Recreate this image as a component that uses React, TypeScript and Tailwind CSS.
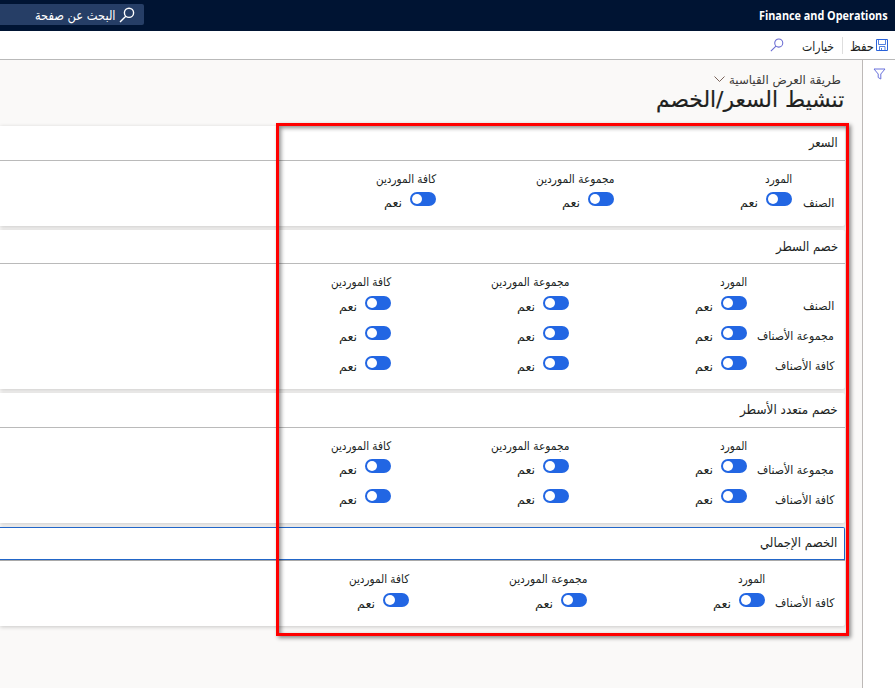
import { useLayoutEffect, useRef, useState } from "react";

type FitProps = { text: string; width: number; className?: string; ltr?: boolean };

// One line of text condensed or stretched horizontally to an exact width.
function Fit({ text, width, className = "", ltr = false }: FitProps) {
  const ref = useRef<HTMLSpanElement>(null);
  const [scale, setScale] = useState(1);
  useLayoutEffect(() => {
    if (ref.current) setScale(width / ref.current.offsetWidth);
  }, [width]);
  return (
    <span dir={ltr ? "ltr" : "rtl"} className={`flex h-5 shrink-0 items-center ${className}`} style={{ width }}>
      <span
        ref={ref}
        className={`block shrink-0 whitespace-nowrap leading-5 ${ltr ? "origin-left" : "origin-right"}`}
        style={{ transform: `scaleX(${scale})` }}
      >
        {text}
      </span>
    </span>
  );
}

type Label = [string, number];

const ITEM: Label = ["الصنف", 31];
const ITEM_GROUP: Label = ["مجموعة الأصناف", 77];
const ALL_ITEMS: Label = ["كافة الأصناف", 59];
const COLUMNS: Label[] = [
  ["المورد", 27],
  ["مجموعة الموردين", 78],
  ["كافة الموردين", 60],
];

function Toggle() {
  return (
    <div className="flex w-[178px] shrink-0 items-start">
      <span className="flex h-[14px] w-[26px] items-center justify-end rounded-full bg-[#2266e3] px-[2px]">
        <span className="size-[9.5px] rounded-full bg-white" />
      </span>
      <Fit text="نعم" width={18} className="mr-[8px] mt-[1px] text-[12px]" />
    </div>
  );
}

type SectionProps = {
  title: Label;
  rows: Label[];
  labelCol: string;
  size: string;
  headerHeight: string;
  firstRow: string;
  labelDrop?: string;
  focused?: boolean;
};

function Section({ title, rows, labelCol, size, headerHeight, firstRow, labelDrop = "", focused }: SectionProps) {
  return (
    <section className={`shrink-0 rounded-r-[2px] bg-white shadow-[0_1px_4px_rgba(0,0,0,0.2)] ${size}`}>
      <div className={`border-b ${headerHeight} ${focused ? "border-[#a9a9a9]" : "border-[#bababa]"}`}>
        <div
          className={`flex h-full pr-[7px] ${
            focused ? "items-start rounded-tr-[2px] border-y border-r border-[#2266c8] pt-[5px]" : "items-center"
          }`}
        >
          <Fit text={title[0]} width={title[1]} className="text-[13px]" />
        </div>
      </div>
      <div className="flex pr-[11px] pt-[8px] text-[12px]">
        <div className={`shrink-0 ${labelCol}`} />
        {COLUMNS.map(([text, width]) => (
          <div key={text} className="w-[178px] shrink-0">
            <Fit text={text} width={width} />
          </div>
        ))}
      </div>
      <div className={`flex flex-col gap-[16px] pr-[11px] text-[12px] ${firstRow}`}>
        {rows.map(([text, width]) => (
          <div key={text} className="flex h-[14px] items-start">
            <div className={`shrink-0 ${labelCol} ${labelDrop}`}>
              <Fit text={text} width={width} />
            </div>
            <Toggle />
            <Toggle />
            <Toggle />
          </div>
        ))}
      </div>
    </section>
  );
}

function Search({ className }: { className: string }) {
  return (
    <svg viewBox="0 0 16 16" fill="none" stroke="currentColor" className={className}>
      <circle cx="10" cy="5.8" r="4.6" />
      <path d="M6.8 9.2 1 15" />
    </svg>
  );
}

export default function App() {
  return (
    <div
      dir="rtl"
      className="relative flex h-[688px] w-[895px] flex-col overflow-hidden bg-[#faf9f8] font-['DejaVu_Sans',sans-serif] text-[#201f1e]"
    >
      <header className="flex h-[31px] shrink-0 items-start justify-between bg-[#001433] text-white">
        <Fit
          ltr
          text="Finance and Operations"
          width={129}
          className="mr-[7px] mt-[6px] font-['Open_Sans','Noto_Sans',sans-serif] text-[12px] font-bold"
        />
        <div className="mt-[4px] flex h-[21px] w-[144px] items-center rounded-r-[2px] bg-[#263e66] pr-[9px]">
          <Search className="size-[16px] stroke-[1.4]" />
          <Fit text="البحث عن صفحة" width={81} className="mr-[3px] mt-[2px] text-[13px]" />
        </div>
      </header>

      <div className="flex h-[29px] shrink-0 items-center border-b border-[#b9b9b9] bg-white pr-[6px] text-[13px]">
        <svg viewBox="0 0 14 14" fill="none" stroke="#2962d9" className="size-[14px] shrink-0">
          <path d="M1.5 1.5h11v11h-11z" />
          <path d="M3.5 1.5v5h7v-5M4.5 12.5v-4h5.5v4M6.5 10v2" strokeOpacity="0.8" />
        </svg>
        <Fit text="حفظ" width={24} className="mr-[1px] mt-[3px]" />
        <span className="mr-[7px] h-[17px] w-px bg-[#dedede]" />
        <Fit text="خيارات" width={32} className="mr-[8px] mt-[3px]" />
        <Search className="mr-[18px] size-[14px] text-[#696bd2] stroke-[1.2]" />
      </div>

      <div className="flex min-h-0 flex-1">
        <aside className="w-[33px] shrink-0 border-l border-[#bdb9b7] bg-white pr-[9px] pt-[8px]">
          <svg viewBox="0 0 13 12" fill="none" stroke="#6971dc" className="h-[12px] w-[13px]">
            <path d="M1 1h11L7.8 6v5L5.2 9.5V6z" />
          </svg>
        </aside>
        <main className="min-w-0 flex-1">
          <div className="flex h-[21px] items-start pr-[21px] pt-[10px] text-[12px] text-[#3b3a39]">
            <Fit text="طريقة العرض القياسية" width={112} />
            <svg viewBox="0 0 11 6" fill="none" stroke="#79635a" className="mr-[4px] mt-[6px] h-[6px] w-[11px]">
              <path d="m.5.5 5 5 5-5" />
            </svg>
          </div>
          <h1 className="h-[45px] pr-[18px] pt-[9px]">
            <Fit text="تنشيط السعر/الخصم" width={188} className="text-[22px] [-webkit-text-stroke:0.2px_#201f1e]" />
          </h1>
          <div className="flex flex-col pr-[17px]">
            <Section title={["السعر", 29]} rows={[ITEM]} labelCol="w-[42px]" size="h-[100px]" headerHeight="h-[35px]" firstRow="pt-[3px]" labelDrop="pt-px" />
            <Section title={["خصم السطر", 62]} rows={[ITEM, ITEM_GROUP, ALL_ITEMS]} labelCol="w-[87px]" size="mt-[4px] h-[159px]" headerHeight="h-[34px]" firstRow="pt-[4px]" />
            <Section title={["خصم متعدد الأسطر", 98]} rows={[ITEM_GROUP, ALL_ITEMS]} labelCol="w-[87px]" size="mt-[4px] h-[130px]" headerHeight="h-[35px]" firstRow="pt-[3px]" labelDrop="pt-px" />
            <Section title={["الخصم الإجمالي", 77]} rows={[ALL_ITEMS]} labelCol="w-[69px]" size="mt-[4px] h-[99px]" headerHeight="h-[34px]" firstRow="pt-[4px]" focused />
          </div>
        </main>
      </div>

      {/* Highlight frame drawn over the form */}
      <div className="pointer-events-none absolute left-[276px] top-[123px] h-[513px] w-[573px] border-[3px] border-[#ff0000] shadow-[2px_2px_4px_rgba(0,0,0,0.45),inset_2px_2px_4px_rgba(0,0,0,0.45)]" />
    </div>
  );
}
